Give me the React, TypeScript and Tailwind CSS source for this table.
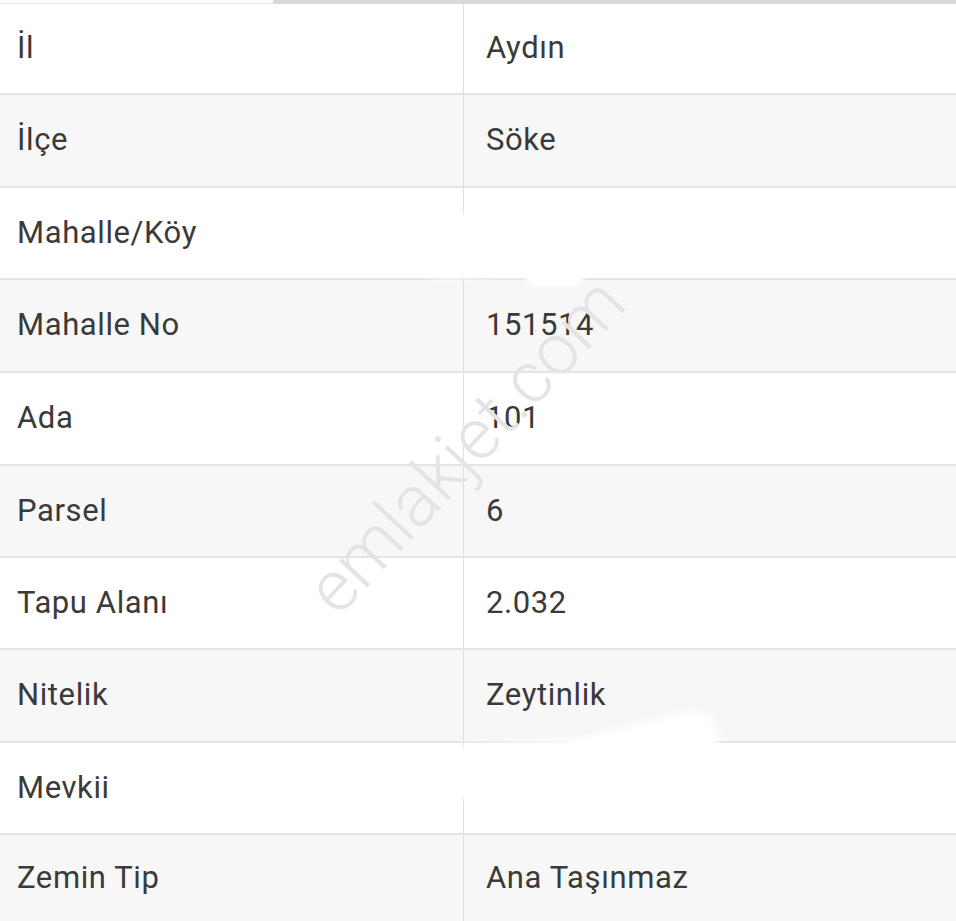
import React from "react";

const rows: { label: string; value: string; h: number; gray: boolean }[] = [
  { label: "İl", value: "Aydın", h: 91, gray: false },
  { label: "İlçe", value: "Söke", h: 93, gray: true },
  { label: "Mahalle/Köy", value: "", h: 92, gray: false },
  { label: "Mahalle No", value: "151514", h: 93, gray: true },
  { label: "Ada", value: "101", h: 93, gray: false },
  { label: "Parsel", value: "6", h: 92, gray: true },
  { label: "Tapu Alanı", value: "2.032", h: 92, gray: false },
  { label: "Nitelik", value: "Zeytinlik", h: 93, gray: true },
  { label: "Mevkii", value: "", h: 92, gray: false },
  { label: "Zemin Tip", value: "Ana Taşınmaz", h: 86, gray: true },
];

export default function App() {
  return (
    <div
      className="relative w-[956px] h-[921px] overflow-hidden bg-white text-[#3a3a3a]"
      style={{ fontFamily: "Roboto, 'Liberation Sans', sans-serif" }}
    >
      <div className="flex h-[4px]">
        <div className="w-[273px] bg-white border-b border-[#e6e6e6]" />
        <div className="flex-1 bg-[#d9d9d9]" />
      </div>
      {rows.map((r, i) => (
        <div
          key={i}
          className={`flex ${r.gray ? "bg-[#f7f7f7]" : "bg-white"} ${
            i < rows.length - 1 ? "border-b-2 border-[#e4e4e4]" : ""
          }`}
          style={{ height: r.h }}
        >
          <div className="w-[464px] shrink-0 border-r border-[#dedede] flex items-center pl-[17px] text-[31px] tracking-[0.6px]">
            {r.label}
          </div>
          <div className="flex-1 flex items-center pl-[22px] text-[31px] tracking-[0.6px]">
            {r.value}
          </div>
        </div>
      ))}

      {/* smudges */}
      <div className="absolute left-[412px] top-[208px] w-[325px] h-[64px] rounded-full bg-white blur-[3px] -rotate-3" />
      <div className="absolute left-[525px] top-[262px] w-[60px] h-[24px] rounded-full bg-white blur-[2px]" />
      <div className="absolute left-[445px] top-[740px] w-[230px] h-[56px] rounded-full bg-white blur-[3px] -rotate-3" />
      <div className="absolute left-[560px] top-[724px] w-[160px] h-[52px] rounded-full bg-white blur-[3px] -rotate-[14deg]" />
      <div className="absolute left-[572px] top-[575px] w-[66px] h-[66px] rounded-full bg-white blur-[3px]" />

      {/* watermark */}
      <div className="absolute left-[466px] top-[446px] -translate-x-1/2 -translate-y-1/2 -rotate-[47deg] pointer-events-none">
        <span className="text-[72px] font-light text-[#e4e4e4] whitespace-nowrap">
          emlakjet.com
        </span>
      </div>
    </div>
  );
}
